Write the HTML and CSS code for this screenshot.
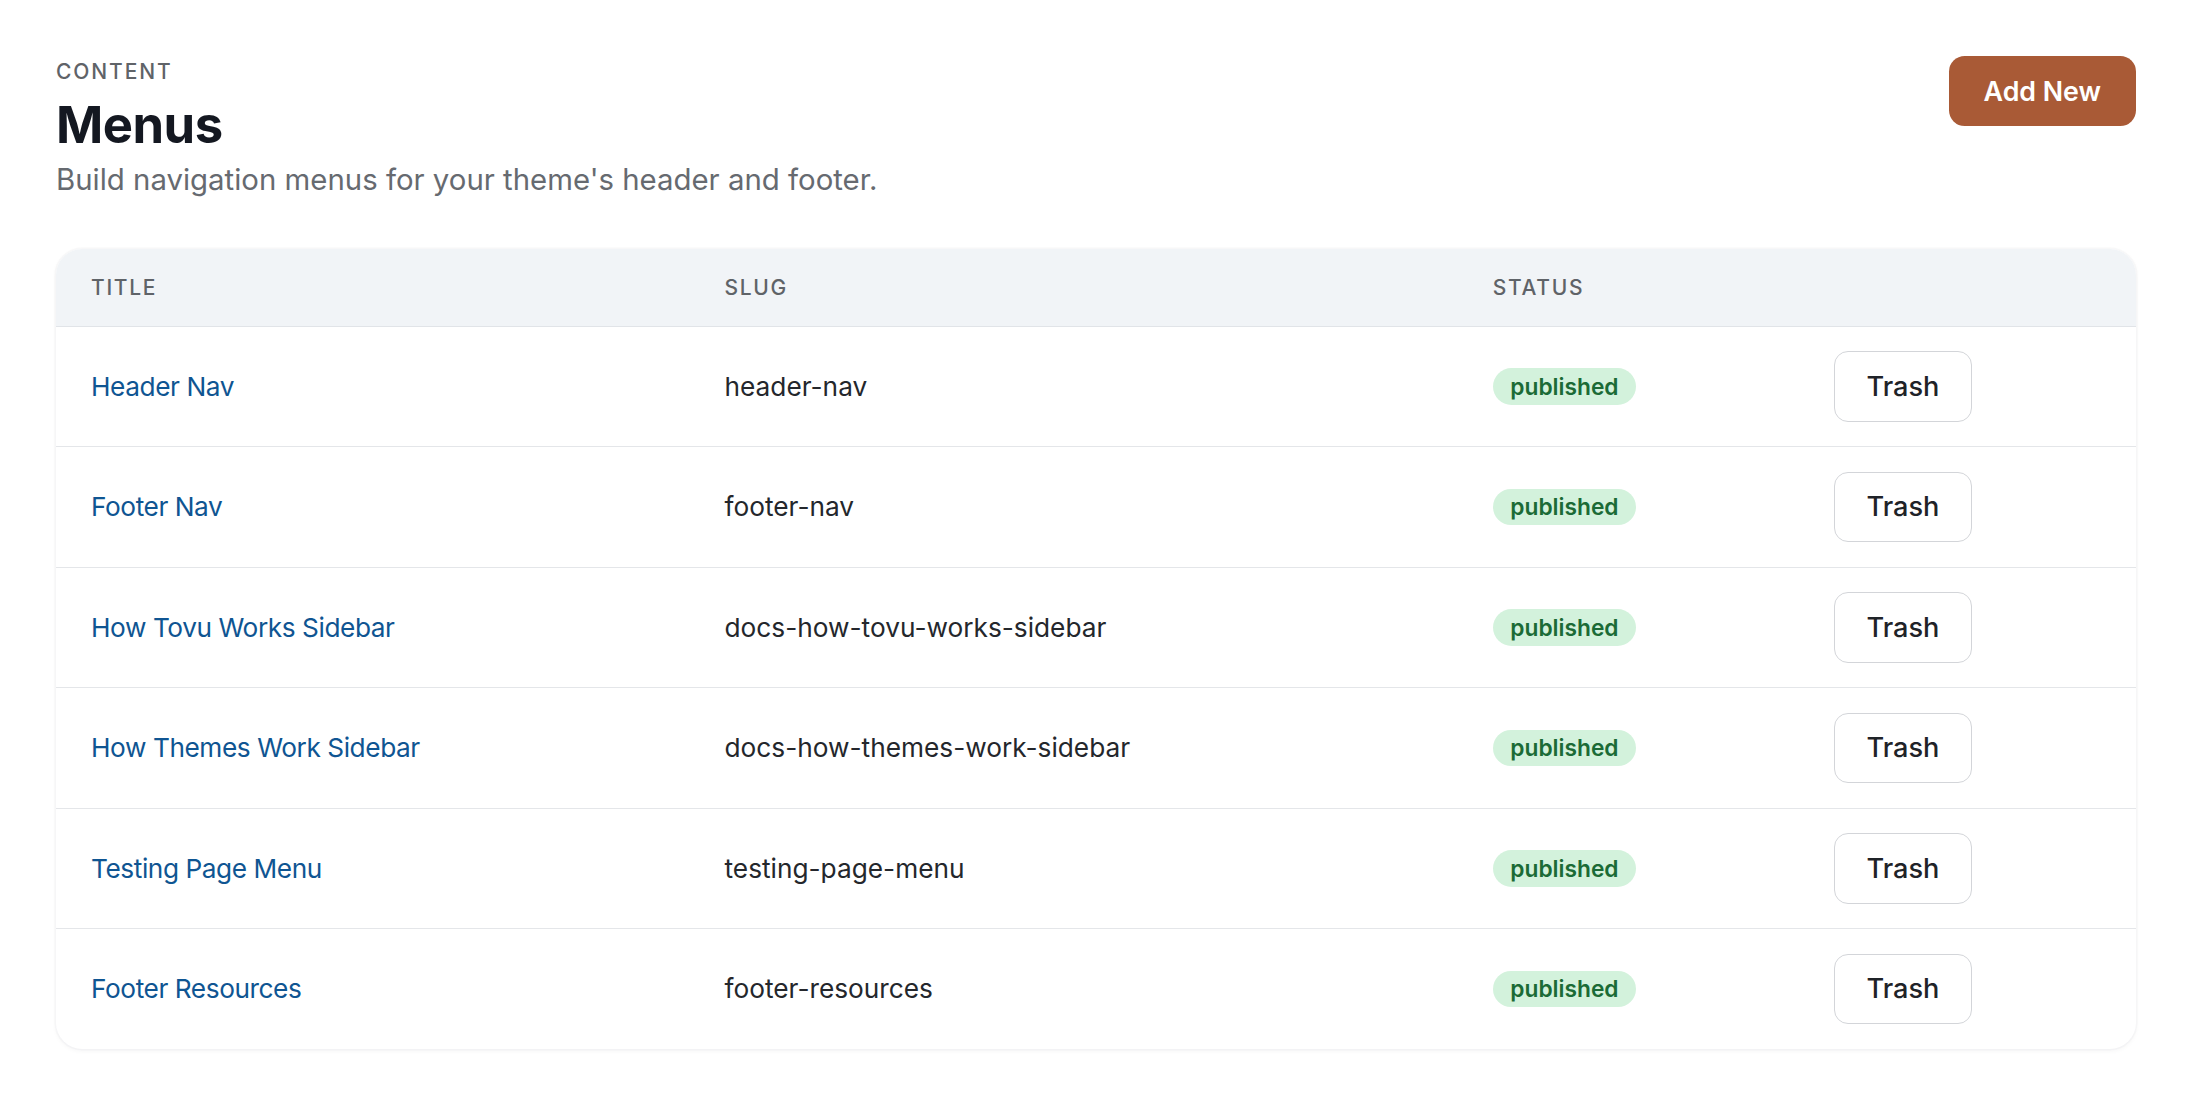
FILE: index.html
```html
<!DOCTYPE html>
<html lang="en">
<head>
<meta charset="utf-8">
<title>Menus</title>
<link rel="stylesheet" href="styles.css">
</head>
<body>
<main class="page">
  <header class="page-head">
    <div class="head-text">
      <div class="eyebrow">Content</div>
      <h1 class="title">Menus</h1>
      <p class="sub">Build navigation menus for your theme's header and footer.</p>
    </div>
    <button class="btn-primary" type="button">Add New</button>
  </header>

  <div class="card">
    <table class="list">
      <colgroup>
        <col class="c-title">
        <col class="c-slug">
        <col class="c-status">
        <col class="c-actions">
      </colgroup>
      <thead>
        <tr>
          <th>Title</th>
          <th>Slug</th>
          <th>Status</th>
          <th></th>
        </tr>
      </thead>
      <tbody>
        <tr>
          <td><a class="link" href="#">Header Nav</a></td>
          <td class="slug">header-nav</td>
          <td><span class="badge">published</span></td>
          <td><button class="btn-ghost" type="button">Trash</button></td>
        </tr>
        <tr>
          <td><a class="link" href="#">Footer Nav</a></td>
          <td class="slug">footer-nav</td>
          <td><span class="badge">published</span></td>
          <td><button class="btn-ghost" type="button">Trash</button></td>
        </tr>
        <tr>
          <td><a class="link" href="#">How Tovu Works Sidebar</a></td>
          <td class="slug">docs-how-tovu-works-sidebar</td>
          <td><span class="badge">published</span></td>
          <td><button class="btn-ghost" type="button">Trash</button></td>
        </tr>
        <tr>
          <td><a class="link" href="#">How Themes Work Sidebar</a></td>
          <td class="slug">docs-how-themes-work-sidebar</td>
          <td><span class="badge">published</span></td>
          <td><button class="btn-ghost" type="button">Trash</button></td>
        </tr>
        <tr>
          <td><a class="link" href="#">Testing Page Menu</a></td>
          <td class="slug">testing-page-menu</td>
          <td><span class="badge">published</span></td>
          <td><button class="btn-ghost" type="button">Trash</button></td>
        </tr>
        <tr>
          <td><a class="link" href="#">Footer Resources</a></td>
          <td class="slug">footer-resources</td>
          <td><span class="badge">published</span></td>
          <td><button class="btn-ghost" type="button">Trash</button></td>
        </tr>
      </tbody>
    </table>
  </div>
</main>
</body>
</html>
```

FILE: styles.css
```css
html {
  zoom: 1.75;
}

body {
  margin: 0;
  background: #ffffff;
  font-family: Inter, "Noto Sans", "Liberation Sans", sans-serif;
  color: #1f2328;
}

.page {
  padding: 33px 32px 32px;
}

.page-head {
  display: flex;
  justify-content: space-between;
  align-items: flex-start;
}

.eyebrow {
  font-size: 12px;
  line-height: 16px;
  font-weight: 500;
  letter-spacing: 0.09em;
  text-transform: uppercase;
  color: #5f6368;
}

.title {
  margin: 4px 0 0;
  font-size: 29px;
  line-height: 36px;
  font-weight: 700;
  letter-spacing: -0.01em;
  color: #141821;
}

.sub {
  margin: 3px 0 0;
  font-size: 16.8px;
  line-height: 22px;
  color: #666a70;
}

.btn-primary {
  margin-top: -1px;
  height: 40px;
  padding: 0 20px;
  border: none;
  border-radius: 9px;
  background: #a95a36;
  color: #ffffff;
  font-family: inherit;
  font-size: 15.3px;
  font-weight: 600;
  cursor: pointer;
}

.card {
  margin-top: 28px;
  border-radius: 15px;
  overflow: hidden;
  background: #ffffff;
  box-shadow: 0 0 0 1px rgba(15, 23, 42, 0.02), 0 1px 3px rgba(15, 23, 42, 0.045);
}

.list {
  width: 100%;
  border-collapse: collapse;
  table-layout: fixed;
}

.c-title { width: 362px; }
.c-slug { width: 439px; }
.c-status { width: 195px; }

.list th {
  height: 44px;
  padding: 0 20px;
  background: #f1f4f7;
  border-bottom: 1px solid #e1e4e8;
  text-align: left;
  font-size: 12px;
  font-weight: 500;
  letter-spacing: 0.08em;
  text-transform: uppercase;
  color: #5f6368;
}

.list td {
  padding: 14px 20px;
  border-bottom: 1px solid #e4e6e9;
  font-size: 15px;
  line-height: 20px;
  vertical-align: middle;
}

.list tbody tr:last-child td {
  border-bottom: none;
}

.link {
  color: #0f5592;
  text-decoration: none;
  letter-spacing: -0.25px;
}

.slug {
  color: #24272c;
}

.badge {
  display: inline-block;
  padding: 2px 10px;
  border-radius: 999px;
  background: #d3f2dc;
  color: #1b6b36;
  font-size: 13px;
  line-height: 17px;
  font-weight: 600;
}

.btn-ghost {
  height: 40.3px;
  padding: 0 18px;
  border: 1px solid #d3d5d9;
  border-radius: 8px;
  background: #ffffff;
  color: #1f2328;
  font-family: inherit;
  font-size: 15.5px;
  font-weight: 500;
  cursor: pointer;
}
```
